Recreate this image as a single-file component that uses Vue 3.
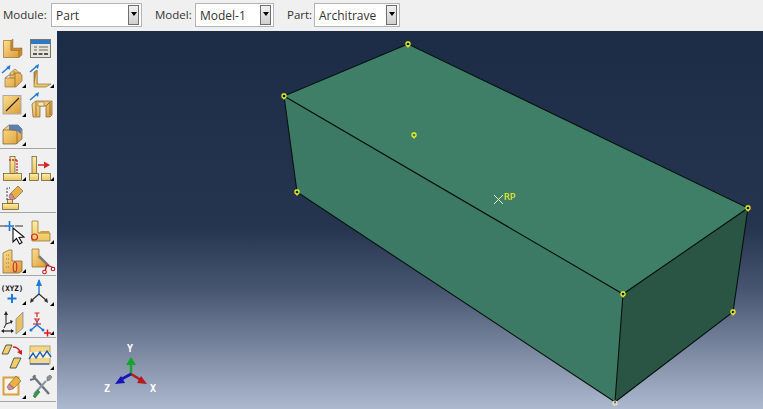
<script setup>
const selectors = [
  { label: "Module:", value: "Part", cls: "module" },
  { label: "Model:", value: "Model-1", cls: "model" },
  { label: "Part:", value: "Architrave", cls: "part" },
];

const vertices = [
  [408, 44],
  [284, 96],
  [748, 208],
  [623, 294],
  [297, 192],
  [733, 312],
  [414, 135],
];
</script>

<template>
  <div class="app">
    <header class="topbar">
      <div v-for="s in selectors" :key="s.label" class="field" :class="s.cls">
        <span class="field-label">{{ s.label }}</span>
        <div class="select">
          <span class="select-value">{{ s.value }}</span>
          <span class="select-btn"><i></i></span>
        </div>
      </div>
    </header>

    <div class="main">
      <aside class="tools">
        <div class="group first">
          <svg class="tool" viewBox="0 0 28 29">
            <defs>
              <linearGradient id="tan" x1="0" y1="0" x2="1" y2="1">
                <stop offset="0" stop-color="#fbdf8f" />
                <stop offset="1" stop-color="#dd9a38" />
              </linearGradient>
              <linearGradient id="pale" x1="0" y1="0" x2="0" y2="1">
                <stop offset="0" stop-color="#fdeea6" />
                <stop offset="1" stop-color="#eec45f" />
              </linearGradient>
            </defs>
            <path d="M3.500 8.500h7.500v10h8v7H3.500z" fill="url(#tan)" stroke="#96702c" stroke-width=".7" />
            <path d="M11 8.500l2-1.500v9h9l-3 2.500h-8zM19 18.500l3-2.500v7l-3 2.500z" fill="#c98a30" stroke="#96702c" stroke-width=".5" />
          </svg>
          <svg class="tool" viewBox="0 0 28 29">
            <rect x="2.500" y="7.500" width="20" height="18" fill="#e8e6da" stroke="#75786f" />
            <rect x="3" y="8" width="19" height="4" fill="#2f78c4" />
            <path d="M6 15h3M11 15h9M6 18h3M11 18h9" stroke="#666" stroke-width="1.200" />
            <path d="M5 22h4M10.500 22h4M16 22h4" stroke="#555" stroke-width="2" />
          </svg>

          <svg class="tool" viewBox="0 0 28 29">
            <path d="M5 26v-9h5v-5l5-4 7 6v6l-6 6z" fill="url(#tan)" stroke="#8d7a55" stroke-width=".7" />
            <path d="M5 17l4-3h5v-4M10 17h5v-5h6M15 17v9" fill="none" stroke="#8a6a2a" stroke-width=".8" />
            <path d="M2 12l7-6" stroke="#1e78d8" stroke-width="1.500" />
            <path d="M10.500 4l-1 5-3-3z" fill="#1e78d8" />
            <path d="M22 27h4v-4z" fill="#000" />
          </svg>
          <svg class="tool" viewBox="0 0 28 29">
            <path d="M6 11l3-2v14l-3 3z" fill="#c48a35" stroke="#7b622f" stroke-width=".6" />
            <path d="M9 9v14h14l-5 3H6" fill="url(#pale)" stroke="#7b622f" stroke-width=".6" />
            <path d="M2 11l7-6" stroke="#1e78d8" stroke-width="1.500" />
            <path d="M11 3l-1 5-3-3z" fill="#1e78d8" />
            <path d="M22 27h4v-4z" fill="#000" />
          </svg>

          <svg class="tool" viewBox="0 0 28 29">
            <rect x="3" y="5.500" width="18" height="18.500" fill="url(#tan)" stroke="#aaa" />
            <path d="M6 21L19 8" stroke="#222" stroke-width="1.100" />
            <path d="M22 27h4v-4z" fill="#000" />
          </svg>
          <svg class="tool" viewBox="0 0 28 29">
            <path d="M4 14l4-3h16v14l-2 2h-4V16h-6v11H5z" fill="url(#tan)" stroke="#7b622f" stroke-width=".7" />
            <path d="M8 11v15M18 16l4-4v13" fill="none" stroke="#7b622f" stroke-width=".8" />
            <path d="M10 16h6v-4h-6z" fill="#f9e7b0" stroke="#7b622f" stroke-width=".5" />
            <path d="M2 10l7-6" stroke="#1e78d8" stroke-width="1.500" />
            <path d="M11 2l-1 5-3-3z" fill="#1e78d8" />
          </svg>

          <svg class="tool" viewBox="0 0 28 29">
            <path d="M3 11l6-5h9l4 4v10l-6 5H3z" fill="url(#tan)" stroke="#6f6136" stroke-width=".7" />
            <path d="M9 6h9l4 4-1 5-4-3-8-1z" fill="#5b7fb5" />
            <path d="M3 11h13l1 2v12" fill="none" stroke="#8a6a2a" stroke-width=".8" />
            <path d="M22 27h4v-4z" fill="#000" />
          </svg>
          <span class="tool"></span>
        </div>

        <div class="group second">
          <svg class="tool" viewBox="0 0 28 29">
            <rect x="10" y="2.500" width="5" height="17" fill="url(#pale)" stroke="#5e5530" stroke-width=".7" />
            <rect x="3.500" y="19.500" width="18" height="7" fill="url(#pale)" stroke="#5e5530" stroke-width=".7" />
            <path d="M9 6h8M17 6v13" stroke="#d6262a" stroke-width="1.300" stroke-dasharray="2 1" fill="none" />
            <path d="M22 27h4v-4z" fill="#000" />
          </svg>
          <svg class="tool" viewBox="0 0 28 29">
            <rect x="4" y="2.500" width="4.500" height="17" fill="url(#pale)" stroke="#5e5530" stroke-width=".7" />
            <rect x="1.500" y="19.500" width="9" height="7" fill="url(#pale)" stroke="#5e5530" stroke-width=".7" />
            <rect x="13.500" y="19.500" width="9" height="7" fill="url(#pale)" stroke="#5e5530" stroke-width=".7" />
            <path d="M10 11h7" stroke="#d6262a" stroke-width="1.500" />
            <path d="M22 11l-6-3.500v7z" fill="#d6262a" />
            <path d="M22 27h4v-4z" fill="#000" />
          </svg>

          <svg class="tool" viewBox="0 0 28 29">
            <path d="M7 17V5h3" fill="none" stroke="#333" stroke-dasharray="2 1.500" />
            <rect x="2.500" y="20.500" width="16" height="6" fill="url(#pale)" stroke="#5e5530" stroke-width=".7" />
            <rect x="7.500" y="16.500" width="5" height="4" fill="url(#pale)" stroke="#5e5530" stroke-width=".7" />
            <path d="M10 11l8-8 5 5-8 8z" fill="#e9b045" stroke="#6d5a2c" stroke-width=".6" />
            <path d="M10 11l-1 3 2 3 4-1-3-5z" fill="#d58aa3" stroke="#6d4a5a" stroke-width=".5" />
          </svg>
          <span class="tool"></span>
        </div>

        <div class="group third">
          <svg class="tool" viewBox="0 0 28 29">
            <path d="M0 9h6M15 9h8" stroke="#333" stroke-width="1" />
            <path d="M9.500 4v10M5 9h9" stroke="#1e78d8" stroke-width="1.600" />
            <path d="M13 11v14l3.500-3.500 3 5.500 2.500-1.500-3-5 5-.5z" fill="#fff" stroke="#111" stroke-width="1.100" />
          </svg>
          <svg class="tool" viewBox="0 0 28 29">
            <path d="M4 4h6v12h12v8H4z" fill="url(#pale)" stroke="#8a6a2a" stroke-width=".7" />
            <path d="M10 16l3-2h8l1 2" fill="#d99a3a" />
            <circle cx="6.500" cy="20" r="3" fill="none" stroke="#d6262a" stroke-width="1.100" />
            <path d="M22 27h4v-4z" fill="#000" />
          </svg>

          <svg class="tool" viewBox="0 0 28 29">
            <path d="M3 7l6-3h3v11h10v10l-3 2H3z" fill="url(#tan)" stroke="#7b622f" stroke-width=".7" />
            <path d="M6 9h4M6 13h4M6 17h4M6 21h4" stroke="#9a7a33" stroke-dasharray="1 1" />
            <ellipse cx="15" cy="21" rx="1.800" ry="5" fill="none" stroke="#d6262a" stroke-width="1.100" />
            <path d="M22 27h4v-4z" fill="#000" />
          </svg>
          <svg class="tool" viewBox="0 0 28 29">
            <path d="M4 3h7v9l7 6v3H4z" fill="url(#tan)" stroke="#8a6a2a" stroke-width=".7" />
            <path d="M11 10l10 10" stroke="#777" stroke-width="2.200" />
            <path d="M19 19l-2 6M19 19l7 3" stroke="#b3181c" stroke-width="1.300" />
            <circle cx="16.500" cy="26" r="1.800" fill="#fff" stroke="#b3181c" stroke-width="1.100" />
            <circle cx="25" cy="23" r="1.800" fill="#fff" stroke="#b3181c" stroke-width="1.100" />
          </svg>
        </div>

        <div class="group fourth">
          <div class="tool xyz">
            <span>(XYZ)</span>
            <svg viewBox="0 0 28 14"><path d="M12 1v9M7.500 5.500h9" stroke="#1e78d8" stroke-width="2" /><path d="M22 12h4V8z" fill="#000" /></svg>
          </div>
          <svg class="tool" viewBox="0 0 28 29">
            <path d="M11 1v15" stroke="#1e78d8" stroke-width="1.400" />
            <path d="M11 0l-3 7h6z" fill="#1e78d8" />
            <path d="M11 15l-8 7M11 15l8 7" stroke="#333" stroke-width="1.200" />
            <path d="M2 24l1-5 3 3zM20 24l-1-5-3 3z" fill="#333" />
            <path d="M22 27h4v-4z" fill="#000" />
          </svg>

          <svg class="tool" viewBox="0 0 28 29">
            <path d="M6 7v9M6 16l6-2M6 16l-2 4" stroke="#222" stroke-width="1" />
            <path d="M6 3l-2 4h4zM13 13l-3-1 1 4z" fill="#222" />
            <path d="M2 23h11" stroke="#222" stroke-width="1.200" />
            <path d="M1 23l3-2v4zM14 23l-3-2v4z" fill="#222" />
            <path d="M16 11l7-7v16l-7 6z" fill="#e8c163" stroke="#7d8fa8" stroke-width=".8" />
            <path d="M22 27h4v-4z" fill="#000" />
          </svg>
          <svg class="tool" viewBox="0 0 28 29">
            <path d="M9 5v4M6.500 5h5M7 11h4l-2 3z" stroke="#d6262a" stroke-width="1.200" fill="none" />
            <path d="M9 13v4" stroke="#1e78d8" stroke-width="1.400" />
            <path d="M3 22l6-5 6 5" fill="none" stroke="#1e78d8" stroke-width="1.400" />
            <circle cx="3" cy="22" r="1.500" fill="#1e78d8" />
            <circle cx="15" cy="22" r="1.500" fill="#1e78d8" />
            <path d="M5 16h8" stroke="#d6262a" stroke-width="1.200" />
            <path d="M16 25h7M19.500 21.500v7" stroke="#e4141a" stroke-width="1.500" />
            <path d="M22 27h4v-4z" fill="#000" />
          </svg>
        </div>

        <div class="group fifth">
          <svg class="tool" viewBox="0 0 28 29">
            <path d="M6 2h6l-4 9H2z" fill="#f0cf70" stroke="#3a3a2a" stroke-width=".8" />
            <path d="M14 15h7l-5 10h-6z" fill="#f0cf70" stroke="#3a3a2a" stroke-width=".8" />
            <path d="M13 4c3 0 6 2 7 5" fill="none" stroke="#c92026" stroke-width="1.500" />
            <path d="M22 12l-5-3 5-2z" fill="#c92026" />
          </svg>
          <svg class="tool" viewBox="0 0 28 29">
            <rect x="2" y="3" width="20" height="18" fill="#f4d78a" stroke="#b9a36a" />
            <rect x="2" y="9" width="20" height="6" fill="#f9f3d7" />
            <path d="M1 16l4-6 3 5 4-6 3 5 4-6 4 6" fill="none" stroke="#1a5cc4" stroke-width="1.400" />
            <path d="M2 21h19" stroke="#1a5cc4" stroke-width="1.200" />
            <path d="M22 27h4v-4z" fill="#000" />
          </svg>

          <svg class="tool" viewBox="0 0 28 29">
            <rect x="3.500" y="5.500" width="15" height="17" fill="#fbf5e4" stroke="#d99f45" stroke-width="2" />
            <path d="M9 12l7-8 5 5-7 7z" fill="#e9b045" stroke="#6d5a2c" stroke-width=".6" />
            <path d="M9 12l-2 3 2 3 4-1 1-1z" fill="#d58aa3" stroke="#6d4a5a" stroke-width=".5" />
            <path d="M22 27h4v-4z" fill="#000" />
          </svg>
          <svg class="tool" viewBox="0 0 28 29">
            <path d="M5 4l16 18" stroke="#6c7480" stroke-width="2.400" />
            <path d="M2 8l4-1 1-4" stroke="#6c7480" stroke-width="2" fill="none" />
            <path d="M19 5l3-2 2 2-2 3-3 1z" fill="#8e959e" stroke="#55606a" stroke-width=".5" />
            <path d="M18 9L6 22" stroke="#8e959e" stroke-width="2" />
            <path d="M10 18l-5 6 2 2 5-6z" fill="#2f9a4d" stroke="#1e6a33" stroke-width=".5" />
          </svg>
        </div>
      </aside>

      <section class="viewport">
        <svg class="scene" viewBox="57 31 706 378">
          <defs>
            <linearGradient id="sky" x1="0" y1="0" x2="0" y2="1">
              <stop offset="0" stop-color="#1c2c47" />
              <stop offset=".52" stop-color="#26354f" />
              <stop offset=".68" stop-color="#465470" />
              <stop offset=".83" stop-color="#76839c" />
              <stop offset="1" stop-color="#adb9cf" />
            </linearGradient>
          </defs>
          <rect x="57" y="31" width="706" height="378" fill="url(#sky)" />

          <polygon points="408,44 284,96 623,294 748,208" fill="#3f7f68" />
          <polygon points="284,96 623,294 615,402 297,192" fill="#3d7a65" />
          <polygon points="623,294 748,208 733,312 615,402" fill="#2a5544" />
          <g fill="none" stroke="#06110d" stroke-width="1.100">
            <path d="M408 44L284 96 623 294 748 208zM284 96L297 192 615 402 623 294M748 208L733 312 615 402" />
          </g>

          <g fill="none" stroke="#f2f21e" stroke-width="1.300">
            <g v-for="[x, y] in vertices" :key="x">
              <rect :x="x - 2" :y="y - 2" width="4" height="4" rx="1.500" />
              <path :d="`M${x} ${y + 2}v1.500`" />
            </g>
          </g>
          <circle cx="615" cy="403" r="2" fill="none" stroke="#e8eeb0" stroke-width="1.200" />

          <path d="M494 195l9 9M503 195l-9 9" stroke="#e4eeb4" stroke-width="1" />
          <text x="504" y="200" class="rp">RP</text>

          <path d="M131 374v-10" stroke="#14a52c" stroke-width="2.400" />
          <path d="M131 357l-5 8h10z" fill="#14a52c" />
          <path d="M131 374l10 6" stroke="#b41a1a" stroke-width="2.600" />
          <path d="M147 384l-10-1 4-7z" fill="#b41a1a" />
          <path d="M131 374l-11 6" stroke="#1414b8" stroke-width="2.600" />
          <path d="M115 384l10-1-4-7z" fill="#1414b8" />
          <text x="130" y="352" class="axis" text-anchor="middle">Y</text>
          <text x="107" y="392" class="axis" text-anchor="middle">Z</text>
          <text x="153" y="392" class="axis" text-anchor="middle">X</text>
        </svg>
      </section>
    </div>
  </div>
</template>

<style scoped>
.app {
  width: 763px;
  height: 409px;
  display: flex;
  flex-direction: column;
  overflow: hidden;
  background: #f0f0f0;
  font-family: "Open Sans", "Liberation Sans", sans-serif;
}

.topbar {
  height: 31px;
  flex: none;
  display: flex;
  align-items: flex-start;
  padding: 3px 0 0 3px;
  box-sizing: border-box;
  font-size: 11.500px;
  color: #333;
}

.field {
  display: flex;
  align-items: center;
}

.module {
  width: 152px;
}
.model {
  width: 132px;
}

.field-label {
  line-height: 24px;
}
.module .field-label {
  width: 48px;
}
.model .field-label {
  width: 40px;
}
.part .field-label {
  width: 27px;
}

.select {
  height: 24px;
  box-sizing: border-box;
  border: 1px solid #b4b4b4;
  background: #fff;
  display: flex;
  align-items: center;
  justify-content: space-between;
  padding: 0 2px 0 4px;
  font-size: 12px;
}
.module .select {
  width: 91px;
}
.model .select {
  width: 79px;
}
.part .select {
  width: 86px;
}

.select-btn {
  width: 11px;
  height: 20px;
  box-sizing: border-box;
  border: 1px solid #6e6e6e;
  background: linear-gradient(#f2f2f2, #cfcfcf);
  display: flex;
  justify-content: center;
  padding-top: 6px;
}
.select-btn i {
  width: 0;
  height: 0;
  border-left: 3.500px solid transparent;
  border-right: 3.500px solid transparent;
  border-top: 4px solid #000;
}

.main {
  flex: 1;
  display: flex;
  min-height: 0;
}

.tools {
  width: 57px;
  flex: none;
  box-sizing: border-box;
  padding-right: 1px;
}

.group {
  display: grid;
  grid-template-columns: 28px 28px;
  grid-auto-rows: 29px;
  border-bottom: 1px solid #a6a6a6;
  padding-top: 4px;
}
.group.first {
  padding-top: 1px;
}
.group.second {
  padding-top: 5px;
}
.group.fourth {
  padding-top: 3px;
}
.group.fifth {
  padding-top: 5px;
  padding-bottom: 0;
}

.tool {
  display: block;
  width: 28px;
  height: 29px;
}

.xyz {
  text-align: center;
  padding-top: 5px;
  box-sizing: border-box;
}
.xyz span {
  display: block;
  font: bold 7.500px/9px "DejaVu Sans Mono", monospace;
  color: #111;
  margin-right: 4px;
}
.xyz svg {
  display: block;
  width: 28px;
  height: 14px;
}

.viewport {
  flex: 1;
  min-width: 0;
}

.scene {
  display: block;
  width: 706px;
  height: 378px;
}

.rp {
  font: 9.500px "DejaVu Sans Mono", monospace;
  fill: #f2f21e;
}

.axis {
  font: bold 10px "DejaVu Sans Mono", monospace;
  fill: #fff;
}
</style>

<style>
html,
body {
  margin: 0;
  overflow: hidden;
}
</style>
